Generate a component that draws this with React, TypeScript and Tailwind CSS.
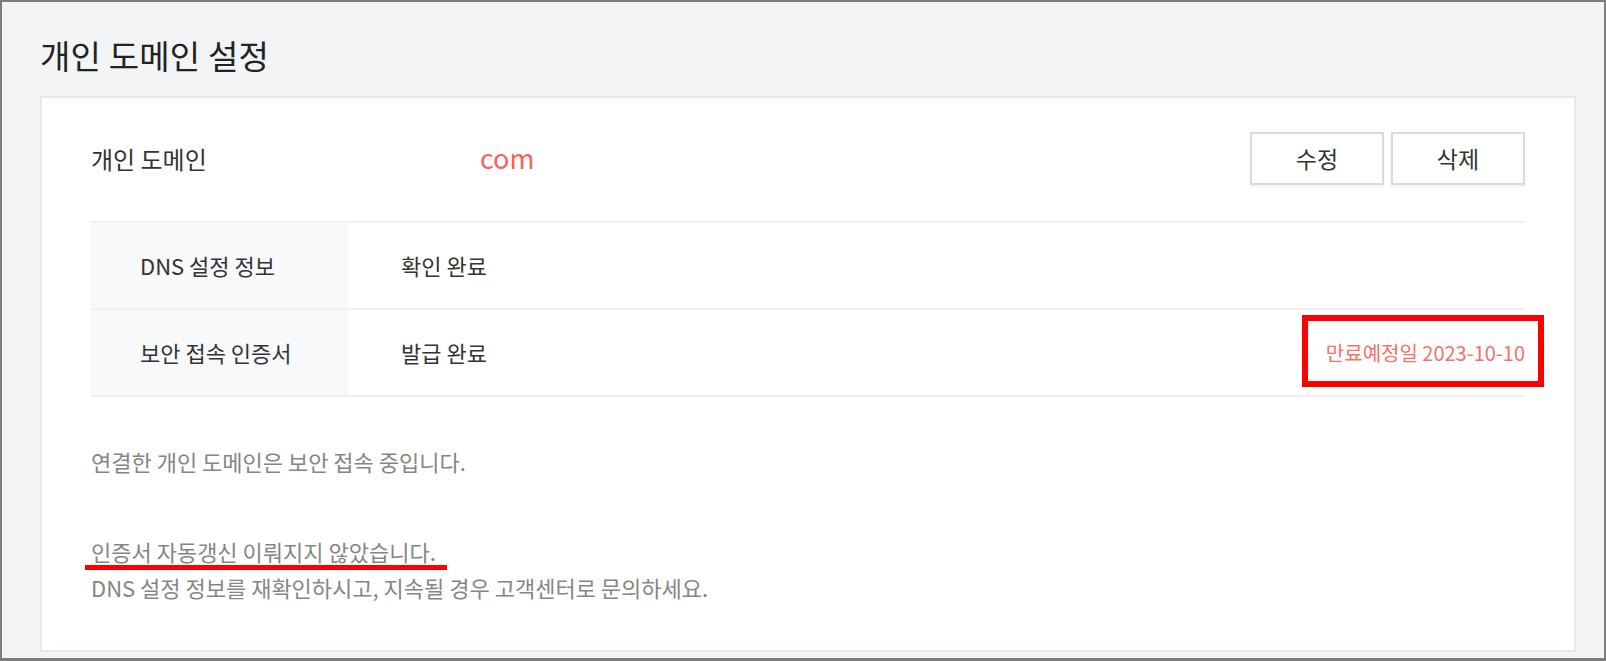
export default function App() {
  return (
    <div
      className="w-[1606px] h-[661px] overflow-hidden border-2 border-b-[3px] border-[#7d7d7d] bg-[#f3f4f6] pl-[38px] pt-[35px]"
      style={{ fontFamily: '"Noto Sans CJK KR", "Noto Sans", sans-serif' }}
    >
      <h1 className="text-[33px] leading-[36px] text-[#222] tracking-[0.2px]">개인 도메인 설정</h1>

      <div className="mt-[23px] w-[1536px] h-[556px] border-2 border-[#e4e8ee] bg-white px-[49px] pt-[34px]">
        {/* domain row */}
        <div className="flex h-[53px] items-center">
          <div className="w-[389px] text-[24px] text-[#333]">개인 도메인</div>
          <div className="text-[27px] text-[#ff5f57]">com</div>
          <div className="ml-auto flex gap-[7px]">
            <button className="w-[134px] h-[53px] border-2 border-[#d6dbe3] bg-white text-[23px] text-[#333] shadow-[0_2px_2px_rgba(0,0,0,0.06)]">
              수정
            </button>
            <button className="w-[134px] h-[53px] border-2 border-[#d6dbe3] bg-white text-[23px] text-[#333] shadow-[0_2px_2px_rgba(0,0,0,0.06)]">
              삭제
            </button>
          </div>
        </div>

        {/* status table */}
        <div className="mt-[36px] border-t-2 border-[#eef0f3]">
          <div className="flex h-[87px] border-b-2 border-[#eef0f3]">
            <div className="flex w-[257px] items-center bg-[#f8f9fb] pl-[49px] text-[22px] text-[#333]">
              DNS 설정 정보
            </div>
            <div className="flex items-center pl-[53px] text-[22px] text-[#333]">확인 완료</div>
          </div>
          <div className="relative flex h-[87px] border-b-2 border-[#eef0f3]">
            <div className="flex w-[257px] items-center bg-[#f8f9fb] pl-[49px] text-[22px] text-[#333]">
              보안 접속 인증서
            </div>
            <div className="flex items-center pl-[53px] text-[22px] text-[#333]">발급 완료</div>
            <div className="ml-auto flex items-center text-[20px] text-[#f3726a]">만료예정일 2023-10-10</div>
            <div className="absolute top-[5px] right-[-19px] w-[242px] h-[72px] border-[6px] border-[#ff0000]" />
          </div>
        </div>

        {/* notes */}
        <p className="mt-[46px] text-[22px] leading-[36px] text-[#858585]">연결한 개인 도메인은 보안 접속 중입니다.</p>
        <div className="mt-[54px] text-[22px] leading-[36px] text-[#858585]">
          <p>
            <span className="relative inline-block">
              인증서 자동갱신 이뤄지지 않았습니다.
              <span className="absolute left-[-6px] right-[-11px] top-[32px] h-[5px] bg-[#ff0000]" />
            </span>
          </p>
          <p>DNS 설정 정보를 재확인하시고, 지속될 경우 고객센터로 문의하세요.</p>
        </div>
      </div>
    </div>
  );
}
